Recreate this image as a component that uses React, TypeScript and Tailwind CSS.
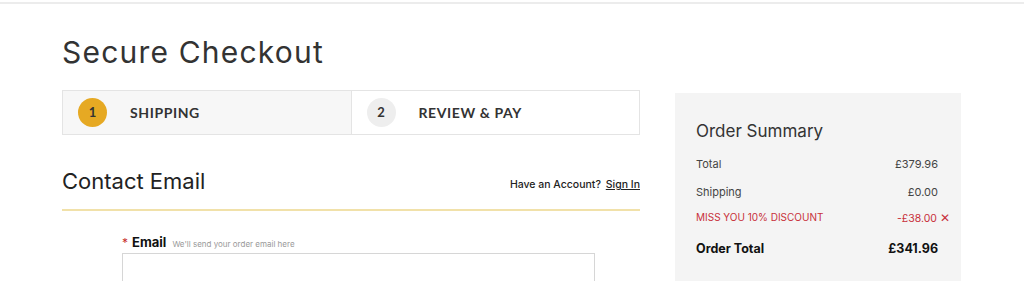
import { useState } from 'react'

const poppins = { fontFamily: 'Inter, "Open Sans", sans-serif' }

function StepBar() {
  const steps = [
    { n: 1, label: 'SHIPPING', active: true },
    { n: 2, label: 'REVIEW & PAY', active: false },
  ]
  return (
    <div className="mt-[18px] flex h-[45px] border border-[#e4e4e4]" style={{ fontFamily: 'Lato, sans-serif' }}>
      {steps.map((s) => (
        <div
          key={s.n}
          className={`flex flex-1 items-center pl-[15px] ${s.active ? 'bg-[#f7f7f7] border-r border-[#e4e4e4]' : 'bg-white'}`}
        >
          <span
            className={`flex h-[29px] w-[29px] items-center justify-center rounded-full text-[13px] font-bold text-[#333] ${s.active ? 'bg-[#e6a923]' : 'bg-[#eeeeee]'}`}
          >
            {s.n}
          </span>
          <span className="ml-[23px] text-[14px] font-bold tracking-[0.6px] text-[#333]">{s.label}</span>
        </div>
      ))}
    </div>
  )
}

function SummaryRow({ label, value, className = '' }: { label: string; value: string; className?: string }) {
  return (
    <div className={`flex items-center justify-between ${className}`}>
      <span>{label}</span>
      <span>{value}</span>
    </div>
  )
}

export default function App() {
  const [email, setEmail] = useState('')

  return (
    <div className="min-h-screen bg-white text-[#333]" style={poppins}>
      <div className="h-[4px] border-b-2 border-[#ececec]" />
      <div className="flex pl-[62px] pr-[63px]">
        {/* Left column */}
        <div className="flex-1">
          <h1 className="mt-[28px] text-[30px] leading-[40px] font-normal tracking-[1.2px] text-[#333]">
            Secure Checkout
          </h1>
          <StepBar />

          {/* Contact email */}
          <div className="mt-[32px] flex items-end justify-between border-b-2 border-[#f1e1a9] pb-[14px]">
            <h2 className="text-[22px] leading-[28px] font-normal text-[#222]">Contact Email</h2>
            <p className="mb-[2px] text-[10.5px] font-medium text-[#222]">
              Have an Account?{' '}
              <a href="#" className="ml-[2px] underline">
                Sign In
              </a>
            </p>
          </div>

          <div className="ml-[60px] mr-[45px] mt-[22px]">
            <label className="flex items-baseline">
              <span className="text-[12px] text-[#c9302c]">*</span>
              <span className="ml-[4px] text-[13px] font-bold text-[#111]">Email</span>
              <span className="ml-[6px] text-[8px] text-[#999]">We'll send your order email here</span>
            </label>
            <input
              type="email"
              value={email}
              onChange={(e) => setEmail(e.target.value)}
              className="mt-0 h-[40px] w-full border border-[#d6d6d6] bg-white px-3 text-[13px] outline-none"
            />
          </div>
        </div>

        {/* Order summary */}
        <div className="ml-[35px] mt-[89px] w-[286px] self-start bg-[#f4f4f4] pl-[21px] pr-[23px] pt-[26px] pb-[30px]">
          <h3 className="text-[17px] leading-[24px] font-normal text-[#333]">Order Summary</h3>
          <div className="mt-[13px] text-[11px] text-[#444]">
            <SummaryRow label="Total" value="£379.96" className="h-[17px]" />
            <SummaryRow label="Shipping" value="£0.00" className="mt-[11px] h-[17px]" />
            <div className="mt-[8px] flex h-[17px] items-center justify-between text-[10px] text-[#c8303a]">
              <span>MISS YOU 10% DISCOUNT</span>
              <span className="-mr-[12px] text-[10.5px]">
                -£38.00<span className="ml-[3px] text-[12px]">✕</span>
              </span>
            </div>
            <SummaryRow
              label="Order Total"
              value="£341.96"
              className="mt-[14px] h-[19px] text-[12.5px] font-bold text-[#111]"
            />
          </div>
        </div>
      </div>
    </div>
  )
}
